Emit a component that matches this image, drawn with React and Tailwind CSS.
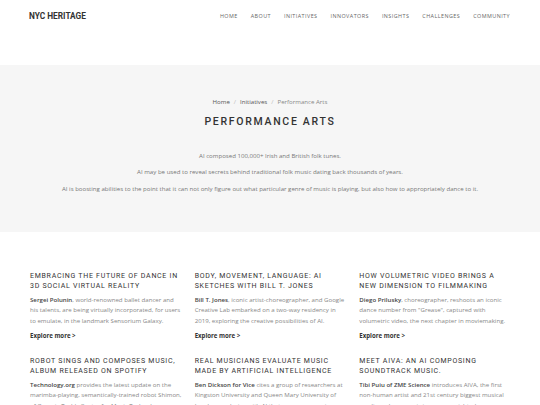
import React from 'react';

const navItems = ['Home', 'About', 'Initiatives', 'Innovators', 'Insights', 'Challenges', 'Community'];

const intro = [
  'AI composed 100,000+ Irish and British folk tunes.',
  'AI may be used to reveal secrets behind traditional folk music dating back thousands of years.',
  'AI is boosting abilities to the point that it can not only figure out what particular genre of music is playing, but also how to appropriately dance to it.',
];

const stories = [
  {
    title: 'Embracing the future of dance in 3D social virtual reality',
    source: 'Sergei Polunin',
    text: ', world-renowned ballet dancer and his talents, are being virtually incorporated, for users to emulate, in the landmark Sensorium Galaxy.',
  },
  {
    title: 'Body, movement, language: AI sketches with Bill T. Jones',
    source: 'Bill T. Jones',
    text: ', iconic artist-choreographer, and Google Creative Lab embarked on a two-way residency in 2019, exploring the creative possibilities of AI.',
  },
  {
    title: 'How volumetric video brings a new dimension to filmmaking',
    source: 'Diego Prilusky',
    text: ', choreographer, reshoots an iconic dance number from "Grease", captured with volumetric video, the next chapter in moviemaking.',
  },
  {
    title: 'Robot sings and composes music, album released on Spotify',
    source: 'Technology.org',
    text: ' provides the latest update on the marimba-playing, semantically-trained robot Shimon, of Georgia Tech\'s Center for Music Technology.',
  },
  {
    title: 'Real musicians evaluate music made by artificial intelligence',
    source: 'Ben Dickson for Vice',
    text: ' cites a group of researchers at Kingston University and Queen Mary University of London, exploring with AI that composes music.',
  },
  {
    title: 'Meet AIVA: An AI composing soundtrack music.',
    source: 'Tibi Puiu of ZME Science',
    text: ' introduces AIVA, the first non-human artist and 21st century biggest musical prodigy, whose music is now copyrighted.',
  },
];

const App = () => {
  return (
    <div className="min-h-screen bg-white font-['Open_Sans',sans-serif]">
      {/* Header */}
      <header className="h-[65px]">
        <div className="h-[33px] px-[29px] flex items-center justify-between">
          <div className="font-['Roboto',sans-serif] font-bold text-[8.3px] text-[#333]">
            NYC HERITAGE
          </div>
          <nav className="flex items-center gap-[13px] pr-[1px]">
            {navItems.map((item) => (
              <a key={item} className="uppercase text-[5.4px] tracking-[0.45px] text-[#666]">
                {item}
              </a>
            ))}
          </nav>
        </div>
      </header>

      {/* Hero */}
      <section className="h-[167px] bg-[#f6f6f6] flex flex-col items-center pt-[32px]">
        <div className="h-[10px] flex items-center gap-[4px] text-[6.1px] leading-[10px]">
          <span className="text-[#555]">Home</span>
          <span className="text-[#bbb]">/</span>
          <span className="text-[#555]">Initiatives</span>
          <span className="text-[#bbb]">/</span>
          <span className="text-[#888]">Performance Arts</span>
        </div>
        <h1 className="mt-[8px] h-[14px] leading-[14px] font-['Roboto',sans-serif] font-medium text-[10.5px] tracking-[1.7px] text-[#333] uppercase">
          Performance Arts
        </h1>
        <div className="mt-[22px] flex flex-col items-center gap-[6.3px]">
          {intro.map((line) => (
            <p key={line} className="text-[6.1px] leading-[10px] text-[#777]">
              {line}
            </p>
          ))}
        </div>
      </section>

      {/* Stories */}
      <section className="pl-[30px] pr-[28px] pt-[38.5px]">
        <div className="grid grid-cols-3 gap-x-[12px] gap-y-[15px]">
          {stories.map((story) => (
            <article key={story.title}>
              <h2 className="uppercase font-['Roboto',sans-serif] text-[7px] leading-[10px] tracking-[0.72px] text-[#333]">
                {story.title}
              </h2>
              <p className="mt-[4px] text-[6.12px] leading-[10.5px] text-[#888]">
                <span className="font-semibold text-[#444]">{story.source}</span>
                {story.text}
              </p>
              <a className="block mt-[4.5px] text-[6.1px] leading-[10px] font-bold text-[#333]">
                Explore more &gt;
              </a>
            </article>
          ))}
        </div>
      </section>
    </div>
  );
};

export default App;
